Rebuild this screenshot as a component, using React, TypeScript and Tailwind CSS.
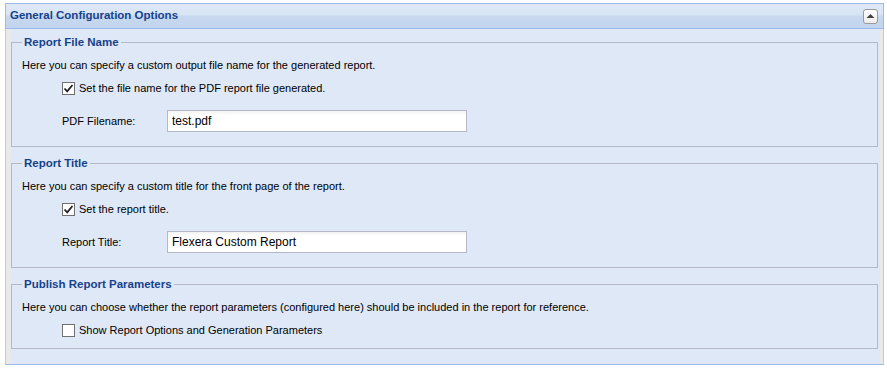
import { ReactNode } from "react";

function CheckBox({ checked }: { checked: boolean }) {
  return (
    <span className="w-[13px] h-[13px] border border-[#707070] bg-white flex items-center justify-center shrink-0">
      {checked && (
        <svg width="11" height="11" viewBox="0 0 11 11">
          <path d="M1.5 5.5 L4.2 8.3 L9.5 2" fill="none" stroke="#222" strokeWidth={1.8} />
        </svg>
      )}
    </span>
  );
}

function Section({
  title,
  children,
  last,
}: {
  title: string;
  children: ReactNode;
  last?: boolean;
}) {
  return (
    <fieldset
      className={`border border-[#b5b8c8] px-[10px] ${last ? "pb-[9px]" : "pb-[14px] mb-[8px]"}`}
    >
      <legend className="px-[2px] text-[11.5px] leading-[16px] font-bold text-[#15428b]">
        {title}
      </legend>
      {children}
    </fieldset>
  );
}

function Description({ children }: { children: ReactNode }) {
  return <div className="mt-[6px] h-[18px] leading-[18px]">{children}</div>;
}

function CheckRow({ checked, label }: { checked: boolean; label: string }) {
  return (
    <div className="mt-[5px] h-[18px] flex items-center gap-[4px] pl-[40px]">
      <CheckBox checked={checked} />
      <span className="leading-[18px]">{label}</span>
    </div>
  );
}

function FieldRow({ label, value }: { label: string; value: string }) {
  return (
    <div className="mt-[13px] h-[22px] flex items-center pl-[40px]">
      <span className="w-[105px]">{label}</span>
      <div className="w-[300px] h-[22px] border border-[#b5b8c8] bg-[linear-gradient(#f2f2f2,#ffffff_4px)] px-[4px] flex items-center text-[12px]">
        {value}
      </div>
    </div>
  );
}

export default function App() {
  return (
    <div className="w-[887px] h-[371px] bg-white pt-[3px] pl-[5px] font-['Liberation_Sans',Arial,sans-serif] text-[11px] text-black">
      <div className="w-[879px]">
        {/* Header */}
        <div className="h-[26px] border border-[#99bbe8] bg-[linear-gradient(#dfe9f6_0%,#d8e4f4_45%,#c7d8ef_50%,#c2d5ee_100%)] flex items-center justify-between pl-[4px] pr-[5px]">
          <span className="text-[11.5px] font-bold text-[#15428b]">General Configuration Options</span>
          <button className="w-[15px] h-[15px] rounded-[3px] border border-[#9a9a9a] bg-[linear-gradient(#ffffff,#ececec)] flex items-center justify-center">
            <svg width="9" height="6" viewBox="0 0 9 6">
              <path d="M0.5 5 L4.5 1 L8.5 5 Z" fill="#444" />
            </svg>
          </button>
        </div>

        {/* Body */}
        <div className="border-x border-[#c9c9c9] border-b border-b-[#99bbe8]">
          <div className="border-l-[5px] border-r-[3px] border-[#e9e9e9] bg-[#dfe8f6] pr-[2px] pt-[5px] pb-[15px]">
            <Section title="Report File Name">
              <Description>Here you can specify a custom output file name for the generated report.</Description>
              <CheckRow checked label="Set the file name for the PDF report file generated." />
              <FieldRow label="PDF Filename:" value="test.pdf" />
            </Section>

            <Section title="Report Title">
              <Description>Here you can specify a custom title for the front page of the report.</Description>
              <CheckRow checked label="Set the report title." />
              <FieldRow label="Report Title:" value="Flexera Custom Report" />
            </Section>

            <Section title="Publish Report Parameters" last>
              <Description>
                Here you can choose whether the report parameters (configured here) should be included in the report for reference.
              </Description>
              <CheckRow checked={false} label="Show Report Options and Generation Parameters" />
            </Section>
          </div>
        </div>
      </div>
    </div>
  );
}
